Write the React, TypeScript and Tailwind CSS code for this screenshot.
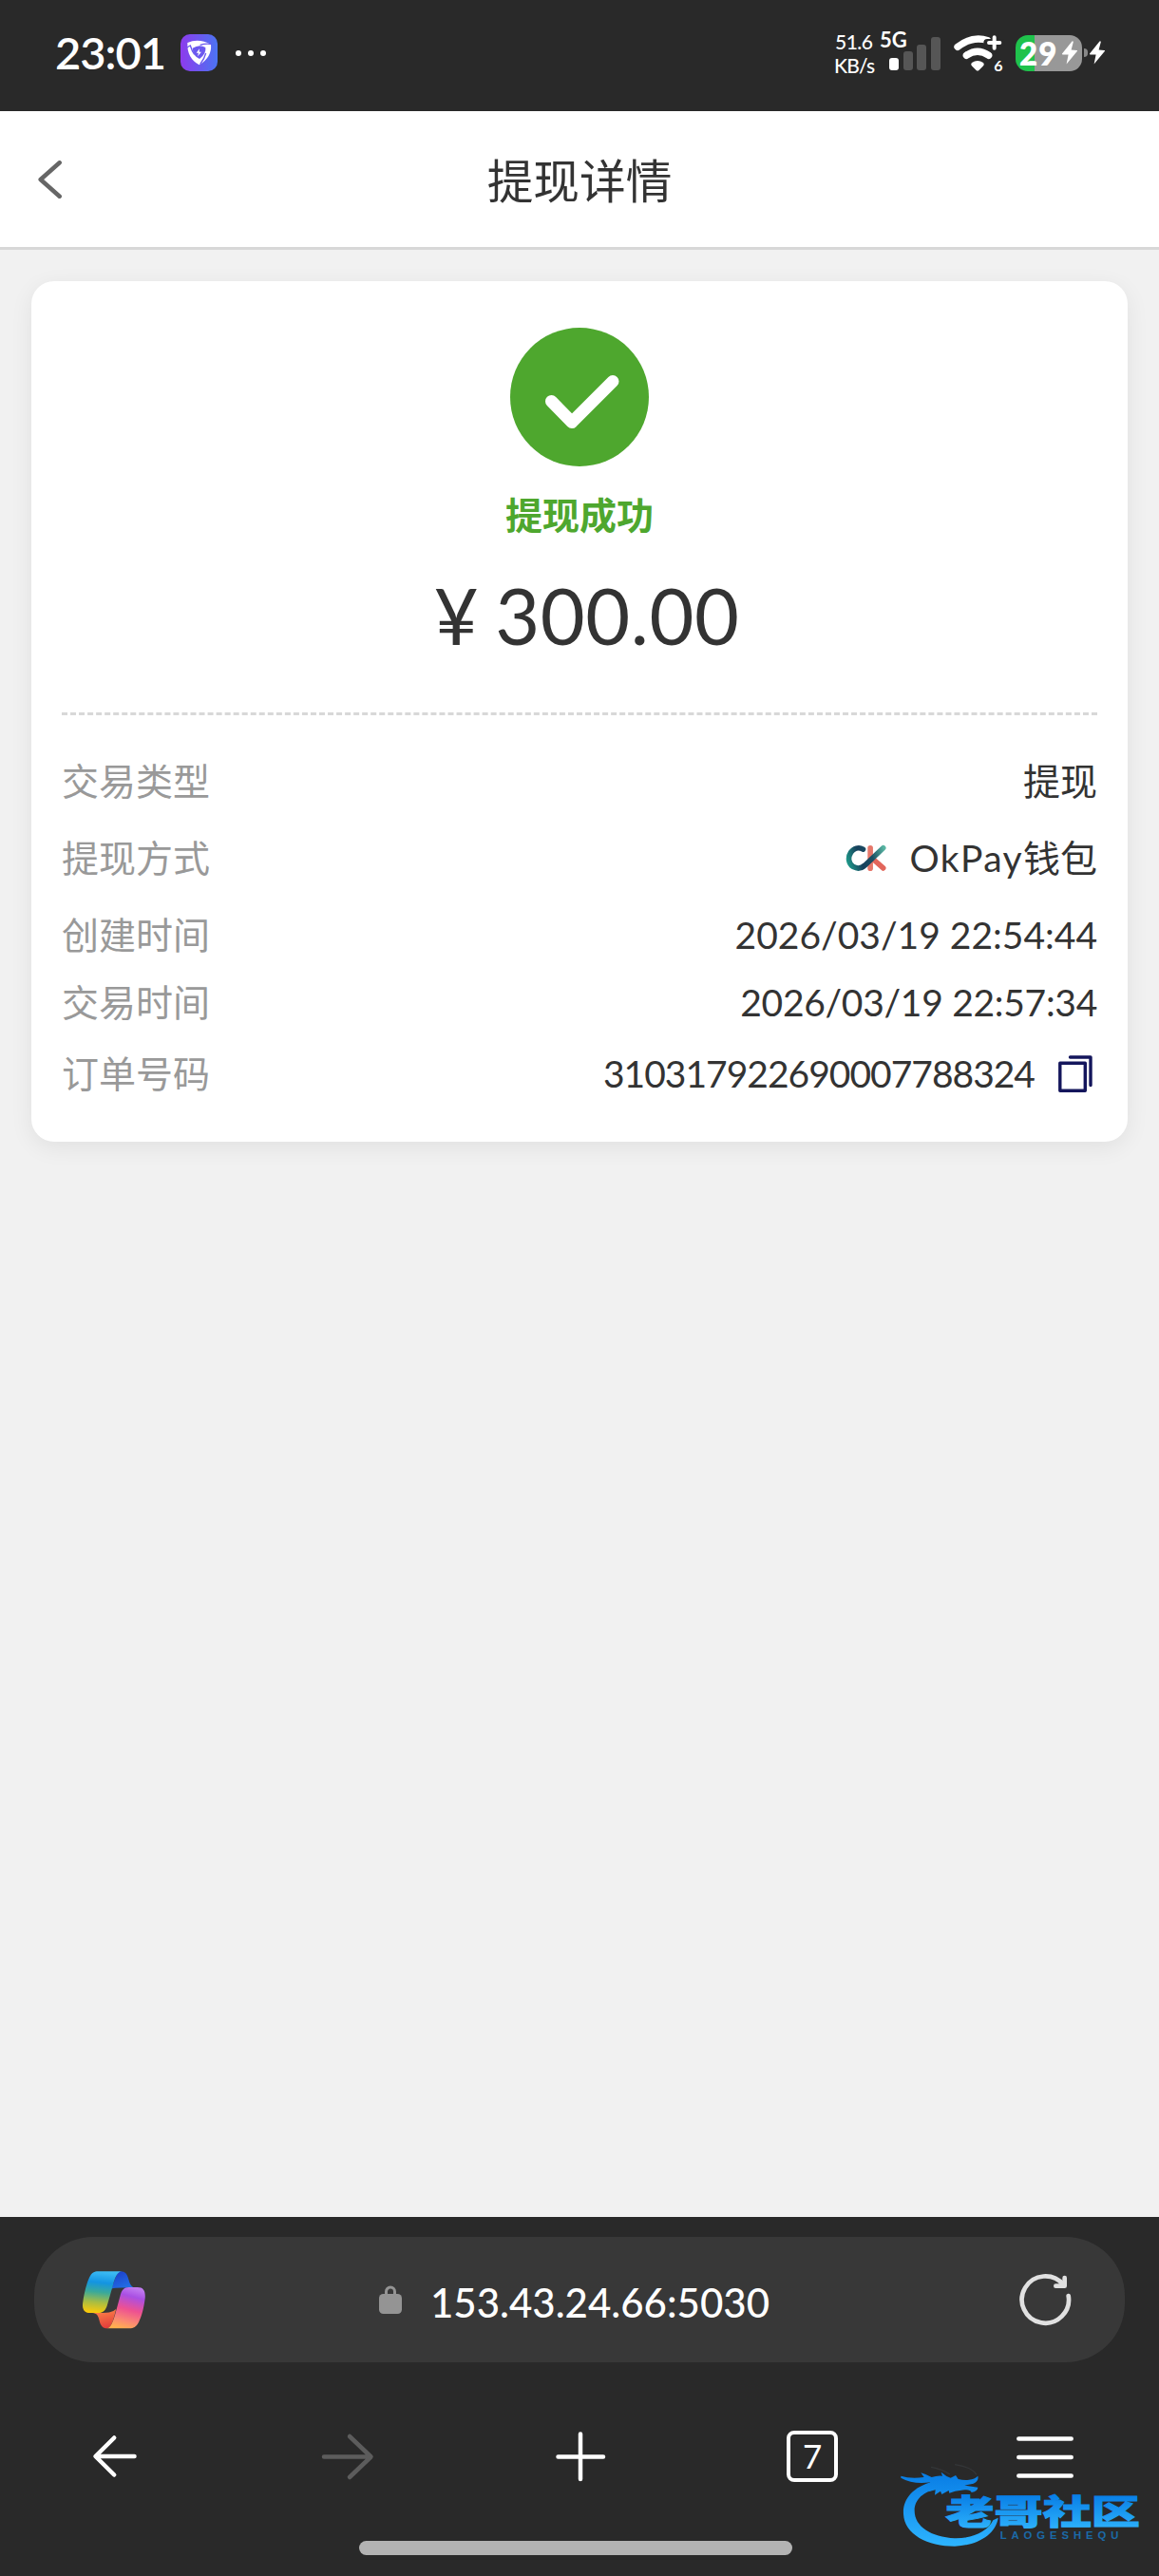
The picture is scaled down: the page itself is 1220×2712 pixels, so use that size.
import type { ReactNode } from 'react';

type Detail = {
  label: string;
  value: ReactNode;
  rowClass: string;
};

// --- Status bar icons ---
const ShieldIcon = () => (
  <svg className="h-[39px] w-[39px]" viewBox="0 0 117 117">
    <defs>
      <linearGradient id="shieldBg" x1="0" y1="0" x2="1" y2="0">
        <stop offset="0" stopColor="#8d3bec" />
        <stop offset="1" stopColor="#4b74f2" />
      </linearGradient>
    </defs>
    <rect width="117" height="117" rx="30" fill="url(#shieldBg)" />
    <path d="M22 27 Q57 12 96 32 Q100 72 59 97 Q20 76 22 27 Z" fill="#fff" />
    <path d="M38 44 Q60 30 79 42 Q82 62 60 78 Q39 68 38 44 Z" fill="#6b58ef" />
    <path d="M20 42 L31 36 Q36 53 44 64 M96 31 Q76 29 62 34 M62 95 Q76 77 80 60" fill="none" stroke="#6b58ef" strokeWidth="4" />
    <path d="M60 46 L50 59 H57 L54 70 L66 56 H59 Z" fill="#fff" />
  </svg>
);

const BoltIcon = () => (
  <svg className="h-[25px] w-[18px] shrink-0" viewBox="0 0 18 25">
    <path d="M11.5 0.5 L1 13.5 Q0.6 14.3 1.6 14.4 L7.6 14.6 L5.6 24.4 L17 10.8 Q17.4 10 16.4 9.9 L10.6 9.6 L12.8 1.2 Q12.6 0 11.5 0.5 Z" fill="#fff" />
  </svg>
);

const SignalIcon = () => (
  <div className="relative flex h-[36px] w-[54px] items-end justify-between">
    <span className="absolute -top-[7px] -left-[10px] text-[22px] leading-none font-bold text-white">5G</span>
    <span className="h-[13px] w-[10px] rounded-[3px] bg-white" />
    <span className="h-[20px] w-[10px] rounded-[3px] bg-[#565656]" />
    <span className="h-[27px] w-[10px] rounded-[3px] bg-[#565656]" />
    <span className="h-[35px] w-[10px] rounded-[3px] bg-[#565656]" />
  </div>
);

const WifiIcon = () => (
  <svg className="mt-[6px] h-[46px] w-[54px]" viewBox="0 0 162 138">
    <g fill="none" stroke="#fff" strokeLinecap="round">
      <path d="M12 40 Q58 4 108 20" strokeWidth="22" />
      <path d="M40 67 Q75 42 110 67" strokeWidth="22" />
    </g>
    <path d="M128 5 V49 M106 27 H150" stroke="#292929" strokeWidth="24" strokeLinecap="round" />
    <path d="M128 10 V44 M111 27 H145" stroke="#fff" strokeWidth="12" strokeLinecap="round" />
    <path d="M57 90 Q75 78 93 90 Q98 96 92 101 L80 113 Q75 118 70 113 L58 101 Q52 96 57 90 Z" fill="#fff" />
    <text x="127" y="117" className="font-['Lato'] text-[48px] font-bold" fill="#fff">6</text>
  </svg>
);

const Battery = () => (
  <div className="flex items-center">
    <div className="flex h-[38px] w-[70px] items-center rounded-[13px] bg-linear-to-r from-[#1fc24c] from-[29%] to-[#989898] to-[29%] pl-[4px]">
      <span className="w-[44px] text-[33px] leading-[38px] font-extrabold tracking-[1px] text-white">29</span>
      <BoltIcon />
    </div>
    <span className="ml-[2px] h-[9px] w-[4px] rounded-r-full bg-[#888]" />
    <span className="ml-px flex">
      <BoltIcon />
    </span>
  </div>
);

// --- Page icons ---
const OkPayLogo = () => (
  <svg className="h-[30px] w-[43px]" viewBox="28 60 130 90">
    <defs>
      <linearGradient id="okTeal" gradientUnits="userSpaceOnUse" x1="30" y1="110" x2="150" y2="70">
        <stop offset="0" stopColor="#1f9a8a" />
        <stop offset="0.35" stopColor="#17405c" />
        <stop offset="0.65" stopColor="#1b4f63" />
        <stop offset="1" stopColor="#58b5a2" />
      </linearGradient>
    </defs>
    <g fill="none" strokeLinecap="round" strokeWidth="17">
      <path d="M107 71 V136" stroke="#e6776a" />
      <path d="M114 105 L148 135" stroke="#e2665b" />
      <path d="M84 75 C70 67 54 72 45 85 C34 102 38 122 53 131 C66 138 80 135 90 126 L148 71" stroke="url(#okTeal)" />
    </g>
  </svg>
);

const CopyIcon = () => (
  <svg className="h-[39px] w-[36px]" viewBox="0 0 36 39" fill="none" stroke="#14165c" strokeWidth="3.4" strokeLinejoin="round" strokeLinecap="round">
    <rect x="1.8" y="8.2" width="26.5" height="29" />
    <path d="M12.5 2 H34 V31.5" />
  </svg>
);

const CopilotIcon = () => (
  <svg className="h-[61px] w-[66px]" viewBox="261 212 199 182">
    <defs>
      <linearGradient id="cpTop" x1="0.5" y1="0" x2="0.4" y2="1">
        <stop offset="0" stopColor="#3cbcf5" />
        <stop offset="0.27" stopColor="#1394e2" />
        <stop offset="0.5" stopColor="#3aa99a" />
        <stop offset="0.75" stopColor="#a9bd42" />
        <stop offset="1" stopColor="#fbc90a" />
      </linearGradient>
      <linearGradient id="cpBlue" x1="0.2" y1="0" x2="0.8" y2="1">
        <stop offset="0" stopColor="#1d3fcb" />
        <stop offset="1" stopColor="#2275e8" />
      </linearGradient>
      <linearGradient id="cpPink" x1="0.6" y1="0" x2="0.35" y2="1">
        <stop offset="0" stopColor="#c07af0" />
        <stop offset="0.2" stopColor="#a94fe3" />
        <stop offset="0.52" stopColor="#ee5191" />
        <stop offset="0.8" stopColor="#fb8a72" />
        <stop offset="1" stopColor="#ffb04e" />
      </linearGradient>
      <linearGradient id="cpOrange" x1="0.3" y1="0" x2="0.6" y2="1">
        <stop offset="0" stopColor="#fe8648" />
        <stop offset="1" stopColor="#e13b3b" />
      </linearGradient>
    </defs>
    <path d="M382 212 C370 213 362 240 353 267 Q362 264 385 264 H428 C414 262 410 248 407 238 C402 220 396 212 382 212 Z" fill="url(#cpBlue)" />
    <path d="M292 344 Q330 344 345 342 Q360 340 367 332 C358 372 350 393 338 393 C325 393 318 385 314 368 C310 352 306 345 292 344 Z" fill="url(#cpOrange)" />
    <path d="M310 212 H386 C371 213 364 230 357 256 L340 316 C335 335 327 344 310 344 H285 C265 344 258 330 262 308 C266 280 275 245 283 230 C290 216 298 212 310 212 Z" fill="url(#cpTop)" />
    <path d="M408 262 H435 C455 262 461 275 459 298 C455 330 448 355 439 373 C431 388 422 393 410 393 H337 C350 392 358 370 365 345 L380 290 C385 270 392 262 408 262 Z" fill="url(#cpPink)" />
  </svg>
);

const LockIcon = () => (
  <svg className="h-[30px] w-[24px]" viewBox="0 0 24 30">
    <path d="M7.5 12 V6.500 a4.500 4.500 0 0 1 9 0 V12" fill="none" stroke="#949494" strokeWidth="3" />
    <rect y="9" width="24" height="21" rx="4.500" fill="#949494" />
  </svg>
);

const ReloadIcon = () => (
  <svg className="h-[56px] w-[56px]" viewBox="636 219 168 168" fill="none" stroke="#e1e1e1" strokeWidth="14" strokeLinecap="round" strokeLinejoin="round">
    <path d="M794 291 A74 74 0 1 1 778 256" />
    <path d="M782 234 V260 H754" />
  </svg>
);

// --- Community watermark in the bottom corner ---
const Watermark = () => (
  <svg className="absolute right-0 bottom-[22px] h-[100px] w-[280px]" viewBox="0 0 840 300">
    <defs>
      <linearGradient id="wmText" gradientUnits="userSpaceOnUse" x1="0" y1="110" x2="0" y2="215">
        <stop offset="0" stopColor="#087ee6" />
        <stop offset="1" stopColor="#2cb0fb" />
      </linearGradient>
      <linearGradient id="wmRing" gradientUnits="userSpaceOnUse" x1="0" y1="50" x2="0" y2="270">
        <stop offset="0" stopColor="#0a7fe6" />
        <stop offset="1" stopColor="#2db4ff" />
      </linearGradient>
    </defs>
    <g fill="url(#wmRing)">
      <path d="M125 68 C62 84 30 125 33 170 C36 235 110 272 195 272 C265 270 325 235 332 182 L316 190 C300 225 250 248 195 247 C120 243 68 210 68 160 C68 125 95 98 150 88 Z" />
      <path d="M25 50 Q55 60 98 54 L88 40 Q108 46 122 54 Q140 48 156 50 L152 38 Q168 52 182 56 L198 48 L206 60 Q225 64 240 62 Q258 60 268 50 Q272 66 254 74 L226 80 L268 86 Q268 98 248 102 Q244 92 226 94 L196 98 L178 104 L176 96 L154 108 L150 98 L132 110 L134 94 L112 100 L126 84 L106 88 L118 70 Q64 78 25 56 Z" />
    </g>
    <path d="M120 22 Q155 28 180 45 M195 14 Q250 22 264 46" fill="none" stroke="#343638" strokeWidth="4" />
    <text
      x="166"
      y="205"
      textLength="614"
      lengthAdjust="spacingAndGlyphs"
      className="font-['Noto_Sans_CJK_SC'] text-[108px] font-black"
      fill="url(#wmText)"
      stroke="url(#wmText)"
      strokeWidth="3"
    >
      老哥社区
    </text>
    <text x="338" y="249" textLength="374" className="font-['Liberation_Sans'] text-[34px] font-bold" fill="#1b6aa8">
      LAOGESHEQU
    </text>
  </svg>
);

const details: Detail[] = [
  { label: '交易类型', value: '提现', rowClass: 'h-[82px]' },
  {
    label: '提现方式',
    value: (
      <>
        <OkPayLogo />
        <span className="ml-[25px] tracking-[1.4px]">OkPay</span>
        <span>钱包</span>
      </>
    ),
    rowClass: 'h-[81px]',
  },
  { label: '创建时间', value: '2026/03/19 22:54:44', rowClass: 'h-[80px]' },
  {
    label: '交易时间',
    value: <span className="tracking-[-0.3px]">2026/03/19 22:57:34</span>,
    rowClass: 'h-[62px]',
  },
  {
    label: '订单号码',
    value: (
      <>
        <span className="tracking-[-1px]">310317922690007788324</span>
        <button className="mr-[5px] ml-[25px]">
          <CopyIcon />
        </button>
      </>
    ),
    rowClass: 'h-[88px]',
  },
];

export default function App() {
  return (
    <div className="relative flex h-[2712px] w-[1220px] flex-col overflow-hidden bg-[#f1f1f1] font-['Lato','Noto_Sans_CJK_SC',sans-serif] text-[#333]">
      {/* Status bar */}
      <div className="flex h-[117px] shrink-0 items-center bg-[#292929] pr-[56px] pb-[6px] pl-[58px]">
        <span className="text-[47px] leading-none font-semibold tracking-[-1px] text-white">23:01</span>
        <span className="ml-[16px]">
          <ShieldIcon />
        </span>
        <span className="ml-[19px] flex gap-[7px]">
          <i className="h-[6px] w-[6px] rounded-full bg-white" />
          <i className="h-[6px] w-[6px] rounded-full bg-white" />
          <i className="h-[6px] w-[6px] rounded-full bg-white" />
        </span>
        <div className="ml-auto flex items-center">
          <div className="mr-[16px] w-[42px] text-[21px] leading-[25px] font-medium tracking-[-0.8px] text-white">
            <p className="pl-px tracking-[-0.500px]">51.6</p>
            <p>KB/s</p>
          </div>
          <SignalIcon />
          <span className="ml-[14px]">
            <WifiIcon />
          </span>
          <span className="ml-[11px]">
            <Battery />
          </span>
        </div>
      </div>

      {/* Page header */}
      <header className="grid h-[146px] shrink-0 grid-cols-[1fr_auto_1fr] items-center border-b-[3px] border-[#d7d7d7] bg-white">
        <button className="ml-[40px] w-fit">
          <svg className="h-[40px] w-[26px]" viewBox="0 0 26 40" fill="none" stroke="#666" strokeWidth="4.500" strokeLinecap="round" strokeLinejoin="round">
            <path d="M22.700 2.300 L2.700 20 L22.700 37.700" />
          </svg>
        </button>
        <h1 className="mt-[3px] text-[48.700px] leading-none">提现详情</h1>
      </header>

      {/* Withdrawal card */}
      <main className="flex-1 px-[33px] pt-[33px]">
        <section className="h-[906px] rounded-[24px] bg-white px-[32px] pt-[49px] shadow-[0_6px_24px_rgba(0,0,0,0.07)]">
          <div className="flex h-[408px] flex-col items-center border-b-[3px] border-dashed border-[#d8d8d8] text-center">
            <svg className="h-[146px] w-[146px]" viewBox="0 0 146 146">
              <circle cx="73" cy="73" r="73" fill="#4ea72e" />
              <path d="M43.500 77.500 L65 99.500 L108 56.500" fill="none" stroke="#fff" strokeWidth="13" strokeLinecap="round" strokeLinejoin="round" />
            </svg>
            <p className="mt-[31px] text-[39px] leading-[40px] font-bold text-[#4ea72e]">提现成功</p>
            <p className="mt-[43px] ml-[15px] text-[81px] leading-[86px] tracking-[0.500px] [word-spacing:-4px]">¥ 300.00</p>
          </div>
          <dl className="mt-[28px] text-[39px] leading-none">
            {details.map((d) => (
              <div key={d.label} className={`flex items-center justify-between ${d.rowClass}`}>
                <dt className="text-[#999]">{d.label}</dt>
                <dd className="flex items-center">{d.value}</dd>
              </div>
            ))}
          </dl>
        </section>
      </main>

      {/* Browser toolbar */}
      <footer className="h-[378px] shrink-0 bg-[#292929] pt-[21px] text-white">
        <div className="mx-[36px] flex h-[132px] items-center rounded-[62px] bg-[#383838] pr-[56px] pl-[51px]">
          <CopilotIcon />
          <span className="ml-[246px]">
            <LockIcon />
          </span>
          <span className="mt-[5px] ml-[30px] text-[42px] leading-none font-medium">153.43.24.66:5030</span>
          <span className="ml-auto">
            <ReloadIcon />
          </span>
        </div>
        <nav className="mt-[68px] flex h-[61px] items-center justify-between pr-[90px] pl-[91px]">
          <svg className="h-[60px] w-[60px]" viewBox="0 0 60 60" fill="none" stroke="#fff" strokeWidth="4.500" strokeLinecap="round" strokeLinejoin="round">
            <path d="M50.500 30 H10 M29.200 10.500 L9.500 30 L29.200 49.500" />
          </svg>
          <svg className="h-[60px] w-[60px]" viewBox="0 0 60 60" fill="none" stroke="#5c5c5c" strokeWidth="4.500" strokeLinecap="round" strokeLinejoin="round">
            <path d="M5 30.500 H54 M32 9 L54.500 30.500 L32 52" />
          </svg>
          <svg className="h-[60px] w-[60px]" viewBox="0 0 60 60" fill="none" stroke="#fff" strokeWidth="4.500" strokeLinecap="round">
            <path d="M30 6.500 V54 M6.500 30.500 H54" />
          </svg>
          <span className="mx-[3px] flex h-[54px] w-[54px] items-center justify-center rounded-[8px] border-[4px] border-white text-[35px] leading-none">7</span>
          <svg className="h-[60px] w-[60px]" viewBox="0 0 60 60" fill="none" stroke="#fff" strokeWidth="4.500" strokeLinecap="round">
            <path d="M2.300 11.500 H57.700 M2.300 31 H57.700 M2.300 50.500 H57.700" />
          </svg>
        </nav>
        <div className="mx-auto mt-[59px] h-[15px] w-[456px] -translate-x-[4px] rounded-full bg-[#b3b3b3]" />
      </footer>

      <Watermark />
    </div>
  );
}
